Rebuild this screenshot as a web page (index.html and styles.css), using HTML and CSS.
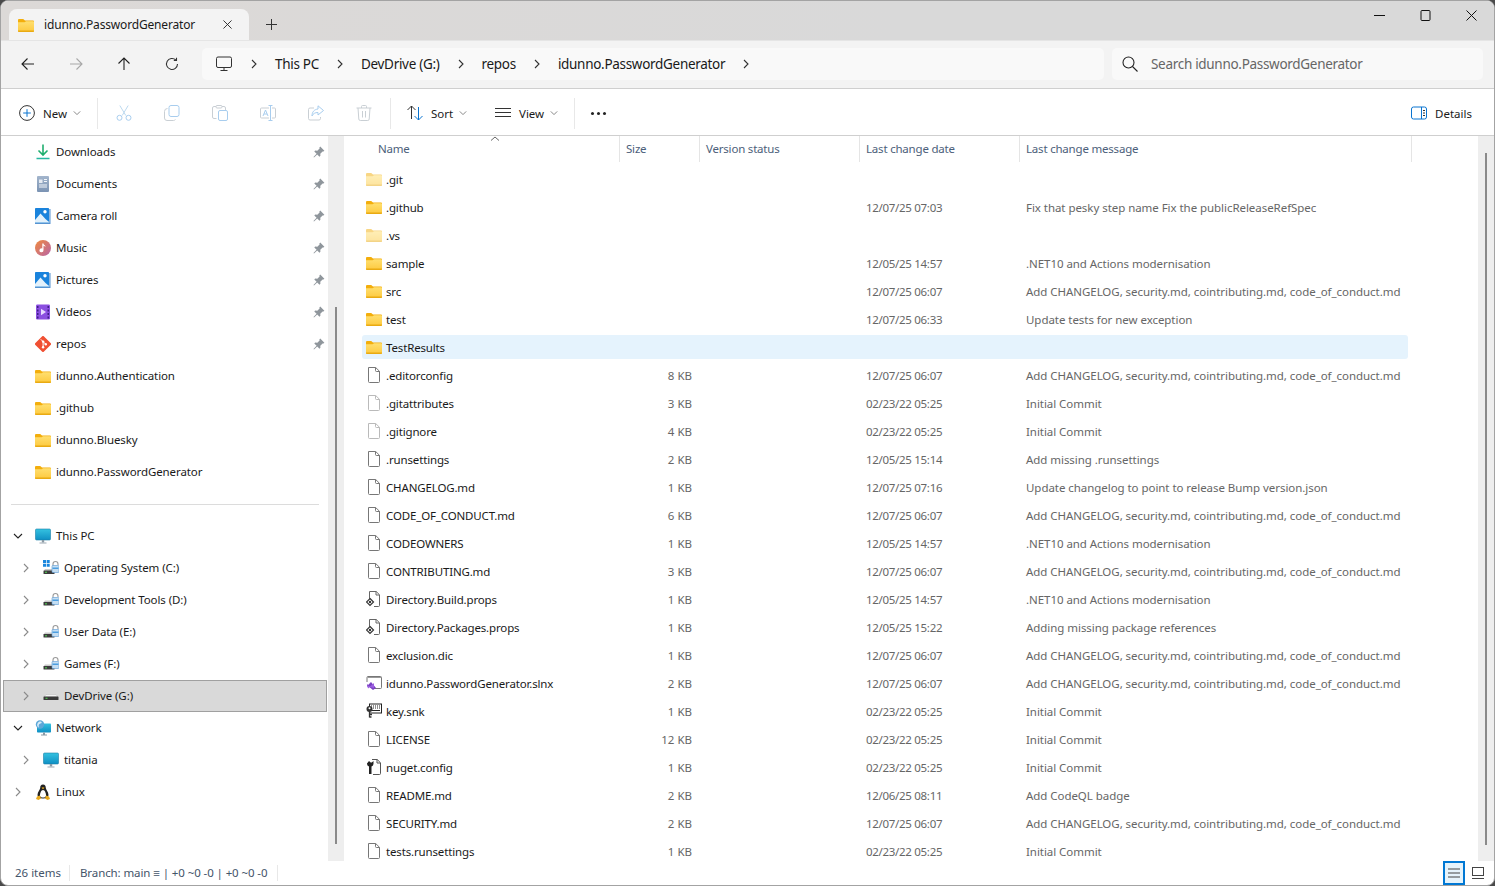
FILE: index.html
```html
<!DOCTYPE html>
<html>
<head>
  <title>idunno.PasswordGenerator - File Explorer</title>
  <link rel="stylesheet" href="styles.css">
</head>
<body>
  <svg class="icon-defs" xmlns="http://www.w3.org/2000/svg">
    <defs>
      <linearGradient id="folderFront" x1="0" y1="0" x2="0" y2="1"><stop offset="0" stop-color="#ffdf70"/><stop offset="1" stop-color="#fdc93e"/></linearGradient>
      <linearGradient id="screenBlue" x1="0" y1="0" x2="0" y2="1"><stop offset="0" stop-color="#35c2e0"/><stop offset="1" stop-color="#0f8fc4"/></linearGradient>
      <linearGradient id="musicGrad" x1="0" y1="0" x2="1" y2="1"><stop offset="0" stop-color="#f08a3c"/><stop offset="1" stop-color="#b865a8"/></linearGradient>
      <linearGradient id="docGrad" x1="0" y1="0" x2="0" y2="1"><stop offset="0" stop-color="#a3b5cc"/><stop offset="1" stop-color="#7b93b3"/></linearGradient>
      <symbol id="i-folder" viewBox="0 0 16 16"><path d="M0 3a1 1 0 0 1 1-1h4.2l1.8 1.6h8a1 1 0 0 1 1 1V7H0z" fill="#f3ae0c"/><path d="M0 5.2h6.6l1.6-1h6.8a1 1 0 0 1 1 1V14a1 1 0 0 1-1 1H1a1 1 0 0 1-1-1z" fill="url(#folderFront)"/><path d="M0 14a1 1 0 0 0 1 1h14a1 1 0 0 0 1-1v-.6H0z" fill="#e9aa12"/></symbol>
      <symbol id="i-file" viewBox="0 0 16 16"><path d="M2.5.5h7.2l3.8 3.8v10.2a1 1 0 0 1-1 1h-9a1 1 0 0 1-1-1z" fill="#fff" stroke="#777"/><path d="M9.5.5v3a1 1 0 0 0 1 1h3" fill="none" stroke="#777"/></symbol>
      <symbol id="i-props" viewBox="0 0 16 16"><path d="M3.5 8V.5h6.7l3.3 3.3v10.7a1 1 0 0 1-1 1H8" fill="#fff" stroke="#666"/><path d="M10 .5v3.500h3.500" fill="none" stroke="#666"/><path d="M4 7.500l3.500 3.500L4 14.500.5 11z" fill="#fff" stroke="#333" stroke-width="1.200"/><circle cx="4" cy="11" r="1.200" fill="#333"/></symbol>
      <symbol id="i-sln" viewBox="0 0 16 16"><path d="M1 7V2.500a1 1 0 0 1 1-1h12.500a1 1 0 0 1 1 1v10a1 1 0 0 1-1 1H8" fill="#fff" stroke="#777"/><path d="M1.500 2.500h13.500" stroke="#999"/><path d="M5 7l5 6-3 2-5-4-1 1V9l1 1 3-3z" fill="#7a3fc4"/><path d="M1 10l3 1.500L8 8v5l-4-1-2 1.500z" fill="#9b5fe0"/></symbol>
      <symbol id="i-key" viewBox="0 0 16 16"><rect x="3.500" y="1" width="12" height="9" fill="#fff" stroke="#222"/><path d="M5 3h1M7 3h1M9 3h1M11 3h1M13 3h1M5 5h1M7 5h1M9 5h1M11 5h1M13 5h1M5 7.500h9" stroke="#222" stroke-width="1.200"/><circle cx="3.500" cy="6" r="3" fill="#333"/><path d="M3.500 8v6.500M3.500 11.500h2.500M3.500 14h2" stroke="#333" stroke-width="1.300" fill="none"/><circle cx="3.500" cy="5.200" r="1" fill="#fff"/></symbol>
      <symbol id="i-nuget" viewBox="0 0 16 16"><path d="M6 .5h5.200l3.300 3.300v10.700a1 1 0 0 1-1 1H7" fill="#fff" stroke="#555"/><path d="M11 .5v3.500h3.500" fill="none" stroke="#555"/><path d="M1 4.500a3 3 0 0 0 2 3V15h2.500V7.500a3 3 0 0 0 2-3V2l-1.800 1.500h-1L3 2z" fill="#222"/></symbol>
      <symbol id="i-pc" viewBox="0 0 16 16"><rect x=".5" y="1" width="15" height="11" rx="1" fill="url(#screenBlue)" stroke="#1b7fa8" stroke-width=".6"/><path d="M6.800 12h2.400v2.500H6.800z" fill="#8a9aa5"/><path d="M4.500 14.500h7v1h-7z" fill="#9aa7b0"/></symbol>
      <symbol id="i-net" viewBox="0 0 16 16"><rect x="2" y="3.500" width="14" height="9" rx=".8" fill="url(#screenBlue)"/><path d="M8 12.500h2v2H8zM6 14.500h6v1H6z" fill="#8a9aa5"/><circle cx="5" cy="4.500" r="4.200" fill="#5da7d8"/><path d="M2.500 3.500c1-2 3-2.500 4-1.500s-1 1.500-2 2-1 2-.5 3.500C2.500 7 1.500 5.500 2.500 3.500z" fill="#d7ecf8"/></symbol>
      <symbol id="i-drive" viewBox="0 0 16 16"><path d="M2 8.500h9v2H0.500z" fill="#c9c9c9"/><rect x=".5" y="10" width="11" height="3.500" rx=".6" fill="#3c3c3c"/><rect x="2" y="11.200" width="2" height="1.200" fill="#4fc04f"/><path d="M10 6V4a2.500 2.500 0 0 1 5 0v1" fill="none" stroke="#9a9a9a" stroke-width="1.100"/><rect x="9" y="5.500" width="7" height="7" rx=".8" fill="#c5def2" stroke="#5b9bd5" stroke-width=".6"/><rect x="9.500" y="7.500" width="6" height="1.500" fill="#4d9ee0"/></symbol>
      <symbol id="i-drive-c" viewBox="0 0 16 16"><path d="M2 9h9v2H0.500z" fill="#c9c9c9"/><rect x=".5" y="10.500" width="11" height="3.500" rx=".6" fill="#3c3c3c"/><rect x="2" y="11.700" width="2" height="1.200" fill="#4fc04f"/><path d="M0 0h3v3H0zM3.700 0h3v3h-3zM0 3.700h3v3H0zM3.700 3.700h3v3h-3z" fill="#1a86dd"/><path d="M10 6V4a2.500 2.500 0 0 1 5 0v1" fill="none" stroke="#9a9a9a" stroke-width="1.100"/><rect x="9" y="5.500" width="7" height="7" rx=".8" fill="#c5def2" stroke="#5b9bd5" stroke-width=".6"/><rect x="9.500" y="7.500" width="6" height="1.500" fill="#4d9ee0"/></symbol>
      <symbol id="i-devdrive" viewBox="0 0 16 16"><path d="M3 6.500h10l2 2.500H1z" fill="#f4f4f4" stroke="#bbb" stroke-width=".5"/><rect x=".5" y="8.500" width="15" height="3.500" rx=".6" fill="#3a3a3a"/><rect x="2.500" y="9.700" width="2" height="1.200" fill="#4fc04f"/></symbol>
      <symbol id="i-linux" viewBox="0 0 16 16"><path d="M8 .5c-2 0-2.800 1.500-2.800 3.500 0 1.500-2.700 4-2.700 7 0 2 2 3.500 5.500 3.500s5.500-1.500 5.500-3.500c0-3-2.700-5.500-2.700-7C10.800 2 10 .5 8 .5z" fill="#222"/><path d="M8 6c-1.800 0-3 3-3 5.500 0 1.500 1.300 2 3 2s3-.5 3-2C11 9 9.800 6 8 6z" fill="#fff"/><path d="M6.500 3.800L8 3.200l1.500.6L8 5.200z" fill="#e8a91c"/><path d="M2 12.500l3-1 1 3-2.500 1.500L1 15zM14 12.500l-3-1-1 3 2.500 1.500 2.500-1z" fill="#e8a91c"/></symbol>
      <symbol id="i-download" viewBox="0 0 16 16"><path d="M8 .5v10M3.500 6.500L8 11l4.500-4.500" fill="none" stroke="#1fae6e" stroke-width="1.600"/><path d="M1.500 14.500h13" stroke="#27b8a0" stroke-width="1.600"/></symbol>
      <symbol id="i-docs" viewBox="0 0 16 16"><rect x="2" y="0" width="12" height="16" rx="1" fill="url(#docGrad)"/><path d="M4 3.500h3.500V7H4z" fill="#eef2f7" opacity=".9"/><path d="M9 3.500h3M9 5.500h3M4 9h8M4 11h8" stroke="#f3f6fa" stroke-width="1"/></symbol>
      <symbol id="i-pictures" viewBox="0 0 16 16"><path d="M15.500 1v15H0v-1.200h14.300V1z" fill="#1f6fc0" opacity=".75"/><rect x="0" y="0" width="14" height="14" rx=".8" fill="#1a83dc"/><circle cx="10" cy="3.800" r="1.700" fill="#fff"/><path d="M0 12l5.500-6.500L10.500 11 14 14H0z" fill="#e3f1fb"/><path d="M0 14h14v.7H0z" fill="#7bb9e8"/></symbol>
      <symbol id="i-music" viewBox="0 0 16 16"><circle cx="8" cy="8" r="8" fill="url(#musicGrad)"/><path d="M8.500 3.500v6.700a2 2 0 1 1-1.200-1.800V3.500z" fill="#fff"/><path d="M8 3.500c.6 1.500 2.500 1.500 2.500 3.500-.8-1-1.500-1.200-2.500-1.300z" fill="#fff"/></symbol>
      <symbol id="i-videos" viewBox="0 0 16 16"><rect x="1" y="0.500" width="14" height="15" rx="1.200" fill="#8b4fe0"/><path d="M2 2h1.500v2H2zM2 5.500h1.500v2H2zM2 9h1.500v2H2zM2 12.500h1.500v2H2zM12.500 2H14v2h-1.500zM12.500 5.500H14v2h-1.500zM12.500 9H14v2h-1.500zM12.500 12.500H14v2h-1.500z" fill="#3f1d86"/><path d="M6 4.800L11 8l-5 3.200z" fill="#e8dbff"/></symbol>
      <symbol id="i-git" viewBox="0 0 16 16"><path d="M7 .4a1.400 1.400 0 0 1 2 0l6.600 6.600a1.400 1.400 0 0 1 0 2L9 15.600a1.400 1.400 0 0 1-2 0L.4 9a1.400 1.400 0 0 1 0-2z" fill="#f05033"/><path d="M5.800 3.300l2.300 2.300v5.600M8.100 5.600l2.700 2.700" fill="none" stroke="#fff" stroke-width="1"/><circle cx="8.100" cy="5.600" r="1.200" fill="#fff"/><circle cx="8.100" cy="11.300" r="1.200" fill="#fff"/><circle cx="10.800" cy="8.300" r="1.200" fill="#fff"/></symbol>
      <symbol id="i-pin" viewBox="0 0 12 12"><path d="M7.200.6l4.200 4.200-1 .8-.8-.2-2.300 2.300.1 2.100-.9.900-2.300-2.300L1 11.500l-.5-.5 3.100-3.200L1.300 5.500l.9-.9 2.100.1 2.300-2.300-.2-.8z" fill="#8f969c"/></symbol>
      <symbol id="i-chev-r" viewBox="0 0 10 10"><path d="M3 1l4 4-4 4" fill="none" stroke="currentColor" stroke-width="1.100"/></symbol>
      <symbol id="i-chev-d" viewBox="0 0 10 10"><path d="M1 3l4 4 4-4" fill="none" stroke="currentColor" stroke-width="1.100"/></symbol>
    </defs>
  </svg>

  <div class="window">
    <!-- tab strip -->
    <div class="tabstrip">
      <div class="tab">
        <svg class="icon16 tab-icon"><use href="#i-folder"/></svg>
        <span class="tab-title">idunno.PasswordGenerator</span>
        <svg class="tab-close" viewBox="0 0 10 10"><path d="M.5.500l9 9M9.500.500l-9 9" stroke="#222" fill="none"/></svg>
      </div>
      <svg class="tab-add" viewBox="0 0 11 11"><path d="M5.500 0v11M0 5.500h11" stroke="#333" fill="none"/></svg>
      <div class="win-controls">
        <button class="win-btn"><svg viewBox="0 0 11 11"><path d="M0 5.500h11" stroke="#111"/></svg></button>
        <button class="win-btn"><svg viewBox="0 0 11 11"><rect x="1" y=".5" width="9" height="10" rx="1" fill="none" stroke="#111"/></svg></button>
        <button class="win-btn"><svg viewBox="0 0 11 11"><path d="M.5.500l10 10M10.500.500l-10 10" stroke="#111" fill="none"/></svg></button>
      </div>
    </div>

    <!-- back / forward / address / search -->
    <div class="navbar">
      <svg class="nav-btn" viewBox="0 0 14 14"><path d="M13 7H1M6.500 1.500L1 7l5.500 5.500" fill="none" stroke="#222" stroke-width="1.100"/></svg>
      <svg class="nav-btn" viewBox="0 0 14 14"><path d="M1 7h12M7.500 1.500L13 7l-5.500 5.500" fill="none" stroke="#a8a8a8" stroke-width="1.100"/></svg>
      <svg class="nav-btn" viewBox="0 0 14 14"><path d="M7 13V1M1.500 6.500L7 1l5.500 5.500" fill="none" stroke="#222" stroke-width="1.100"/></svg>
      <svg class="nav-btn" viewBox="0 0 14 14"><path d="M12.500 7a5.500 5.500 0 1 1-1.700-4M11.500 .8v2.700H8.800" fill="none" stroke="#333" stroke-width="1.100"/></svg>
      <div class="address">
        <svg class="address-pc" viewBox="0 0 16 16"><rect x=".5" y="1" width="15" height="10.500" rx="1.500" fill="none" stroke="#333"/><path d="M8 11.500v3M4.500 14.500h7" stroke="#333" fill="none"/></svg>
        <svg class="crumb-chev"><use href="#i-chev-r"/></svg>
        <span class="crumb">This PC</span>
        <svg class="crumb-chev"><use href="#i-chev-r"/></svg>
        <span class="crumb">DevDrive (G:)</span>
        <svg class="crumb-chev"><use href="#i-chev-r"/></svg>
        <span class="crumb">repos</span>
        <svg class="crumb-chev"><use href="#i-chev-r"/></svg>
        <span class="crumb">idunno.PasswordGenerator</span>
        <svg class="crumb-chev"><use href="#i-chev-r"/></svg>
      </div>
      <div class="search">
        <svg class="search-icon" viewBox="0 0 16 16"><circle cx="6.500" cy="6.500" r="5.500" fill="none" stroke="#222" stroke-width="1.100"/><path d="M10.500 10.500l5 5" stroke="#222" stroke-width="1.100"/></svg>
        <span class="search-text">Search idunno.PasswordGenerator</span>
      </div>
    </div>

    <!-- command bar -->
    <div class="toolbar">
      <div class="tool-new">
        <svg class="icon16" viewBox="0 0 16 16"><circle cx="8" cy="8" r="7.400" fill="none" stroke="#333"/><path d="M8 4.200v7.600M4.200 8h7.600" stroke="#0a74d0" fill="none"/></svg>
        <span class="tool-label">New</span>
        <svg class="tool-chev"><use href="#i-chev-d"/></svg>
      </div>
      <div class="tool-sep"></div>
      <div class="tool-icon"><svg class="icon16" viewBox="0 0 16 16"><path d="M3.800 .5l6 10M12.200 .5l-6 10" stroke="#bcd9ef" fill="none"/><circle cx="3.500" cy="12.800" r="2.500" fill="none" stroke="#a8cdee"/><circle cx="12.500" cy="12.800" r="2.500" fill="none" stroke="#a8cdee"/></svg></div>
      <div class="tool-icon"><svg class="icon16" viewBox="0 0 16 16"><rect x="5" y=".5" width="10" height="11" rx="2" fill="none" stroke="#a8cdee"/><path d="M3.500 3.500a3 3 0 0 0-3 3V13a2.500 2.500 0 0 0 2.500 2.500h6.500a3 3 0 0 0 2-1" fill="none" stroke="#c9cfd4"/></svg></div>
      <div class="tool-icon"><svg class="icon16" viewBox="0 0 16 16"><path d="M4.500 13.500H2a1.500 1.500 0 0 1-1.500-1.500V3A1.500 1.500 0 0 1 2 1.500h10A1.500 1.500 0 0 1 13.500 3v2" fill="none" stroke="#c9cfd4"/><rect x="4" y=".5" width="6" height="2.500" rx="1" fill="#fff" stroke="#c9cfd4"/><rect x="6.500" y="5.500" width="9" height="10" rx="1.500" fill="#fff" stroke="#a8cdee"/></svg></div>
      <div class="tool-icon"><svg class="icon16" viewBox="0 0 16 16"><path d="M9 3H1.500a1 1 0 0 0-1 1v8a1 1 0 0 0 1 1H9M12 3h2.500a1 1 0 0 1 1 1v8a1 1 0 0 1-1 1H12" fill="none" stroke="#c9cfd4"/><path d="M10.500 .5v15M8.500 .5h4M8.500 15.500h4" stroke="#a8cdee" fill="none"/><path d="M3 11l2.500-6L8 11M4 9h3" stroke="#a8cdee" fill="none"/></svg></div>
      <div class="tool-icon"><svg class="icon16" viewBox="0 0 16 16"><path d="M6 3H2a1.500 1.500 0 0 0-1.500 1.500v9A1.500 1.500 0 0 0 2 15h9a1.500 1.500 0 0 0 1.500-1.500V12" fill="none" stroke="#c9cfd4"/><path d="M10 .8L15.500 5.500 10 10V7.500C7 7.500 5.200 8.500 4 11c0-4 2-6.500 6-7z" fill="none" stroke="#a8cdee"/></svg></div>
      <div class="tool-icon"><svg class="icon16" viewBox="0 0 16 16"><path d="M.5 3h15M5.500 3V1.500a1 1 0 0 1 1-1h3a1 1 0 0 1 1 1V3M2 3l.8 11a1.500 1.500 0 0 0 1.500 1.500h7.400a1.500 1.500 0 0 0 1.500-1.500L14 3M6.500 6v6.500M9.500 6v6.500" fill="none" stroke="#c9cfd4"/></svg></div>
      <div class="tool-sep sep-gap"></div>
      <div class="tool-sort">
        <svg class="icon16" viewBox="0 0 16 16"><path d="M4.500 14V1M.5 5l4-4 4 4" fill="none" stroke="#333"/><path d="M11.500 2v13M7.500 11l4 4 4-4" fill="none" stroke="#0a74d0"/></svg>
        <span class="tool-label">Sort</span>
        <svg class="tool-chev"><use href="#i-chev-d"/></svg>
      </div>
      <div class="tool-view">
        <svg class="icon16" viewBox="0 0 16 16"><path d="M0 3.500h16M0 7.500h16M0 11.500h16" stroke="#333" fill="none"/></svg>
        <span class="tool-label">View</span>
        <svg class="tool-chev"><use href="#i-chev-d"/></svg>
      </div>
      <div class="tool-sep"></div>
      <div class="tool-more"><span></span><span></span><span></span></div>
      <div class="tool-details">
        <svg class="icon16" viewBox="0 0 16 16"><rect x=".5" y="2" width="15" height="12" rx="2" fill="none" stroke="#0a74d0"/><path d="M10.500 2v12" stroke="#0a74d0"/><path d="M12 5.500h2M12 8h2M12 10.500h2" stroke="#333"/></svg>
        <span class="tool-label">Details</span>
      </div>
    </div>

    <div class="content">
      <!-- left navigation pane -->
      <div class="sidebar">
        <div class="nav-row"><span class="nav-chev"></span><svg class="icon16"><use href="#i-download"/></svg><span class="nav-text">Downloads</span><svg class="pin"><use href="#i-pin"/></svg></div>
        <div class="nav-row"><span class="nav-chev"></span><svg class="icon16"><use href="#i-docs"/></svg><span class="nav-text">Documents</span><svg class="pin"><use href="#i-pin"/></svg></div>
        <div class="nav-row"><span class="nav-chev"></span><svg class="icon16"><use href="#i-pictures"/></svg><span class="nav-text">Camera roll</span><svg class="pin"><use href="#i-pin"/></svg></div>
        <div class="nav-row"><span class="nav-chev"></span><svg class="icon16"><use href="#i-music"/></svg><span class="nav-text">Music</span><svg class="pin"><use href="#i-pin"/></svg></div>
        <div class="nav-row"><span class="nav-chev"></span><svg class="icon16"><use href="#i-pictures"/></svg><span class="nav-text">Pictures</span><svg class="pin"><use href="#i-pin"/></svg></div>
        <div class="nav-row"><span class="nav-chev"></span><svg class="icon16"><use href="#i-videos"/></svg><span class="nav-text">Videos</span><svg class="pin"><use href="#i-pin"/></svg></div>
        <div class="nav-row"><span class="nav-chev"></span><svg class="icon16"><use href="#i-git"/></svg><span class="nav-text">repos</span><svg class="pin"><use href="#i-pin"/></svg></div>
        <div class="nav-row"><span class="nav-chev"></span><svg class="icon16"><use href="#i-folder"/></svg><span class="nav-text">idunno.Authentication</span></div>
        <div class="nav-row"><span class="nav-chev"></span><svg class="icon16"><use href="#i-folder"/></svg><span class="nav-text">.github</span></div>
        <div class="nav-row"><span class="nav-chev"></span><svg class="icon16"><use href="#i-folder"/></svg><span class="nav-text">idunno.Bluesky</span></div>
        <div class="nav-row"><span class="nav-chev"></span><svg class="icon16"><use href="#i-folder"/></svg><span class="nav-text">idunno.PasswordGenerator</span></div>
        <div class="nav-sep"></div>
        <div class="nav-row"><svg class="nav-chev dark"><use href="#i-chev-d"/></svg><svg class="icon16"><use href="#i-pc"/></svg><span class="nav-text">This PC</span></div>
        <div class="nav-row sub"><svg class="nav-chev"><use href="#i-chev-r"/></svg><svg class="icon16"><use href="#i-drive-c"/></svg><span class="nav-text">Operating System (C:)</span></div>
        <div class="nav-row sub"><svg class="nav-chev"><use href="#i-chev-r"/></svg><svg class="icon16"><use href="#i-drive"/></svg><span class="nav-text">Development Tools (D:)</span></div>
        <div class="nav-row sub"><svg class="nav-chev"><use href="#i-chev-r"/></svg><svg class="icon16"><use href="#i-drive"/></svg><span class="nav-text">User Data (E:)</span></div>
        <div class="nav-row sub"><svg class="nav-chev"><use href="#i-chev-r"/></svg><svg class="icon16"><use href="#i-drive"/></svg><span class="nav-text">Games (F:)</span></div>
        <div class="nav-row sub selected"><svg class="nav-chev"><use href="#i-chev-r"/></svg><svg class="icon16"><use href="#i-devdrive"/></svg><span class="nav-text">DevDrive (G:)</span></div>
        <div class="nav-row"><svg class="nav-chev dark"><use href="#i-chev-d"/></svg><svg class="icon16"><use href="#i-net"/></svg><span class="nav-text">Network</span></div>
        <div class="nav-row sub"><svg class="nav-chev"><use href="#i-chev-r"/></svg><svg class="icon16"><use href="#i-pc"/></svg><span class="nav-text">titania</span></div>
        <div class="nav-row"><svg class="nav-chev"><use href="#i-chev-r"/></svg><svg class="icon16"><use href="#i-linux"/></svg><span class="nav-text">Linux</span></div>
      </div>
      <div class="scrolltrack side-track"><div class="thumb side-thumb"></div></div>

      <!-- file list -->
      <div class="files">
        <svg class="sort-caret" viewBox="0 0 10 5"><path d="M1 4.500L5 1l4 3.500" fill="none" stroke="#666"/></svg>
        <div class="col-head">
          <div class="head-cell head-name">Name</div>
          <div class="head-cell">Size</div>
          <div class="head-cell">Version status</div>
          <div class="head-cell">Last change date</div>
          <div class="head-cell head-last">Last change message</div>
        </div>
        <div class="file-list">
          <div class="file-row"><span class="name hidden-item"><svg class="icon16"><use href="#i-folder"/></svg><span>.git</span></span></div>
          <div class="file-row"><span class="name"><svg class="icon16"><use href="#i-folder"/></svg><span>.github</span></span><span class="size"></span><span></span><span class="date">12/07/25 07:03</span><span class="cell">Fix that pesky step name Fix the publicReleaseRefSpec</span></div>
          <div class="file-row"><span class="name hidden-item"><svg class="icon16"><use href="#i-folder"/></svg><span>.vs</span></span></div>
          <div class="file-row"><span class="name"><svg class="icon16"><use href="#i-folder"/></svg><span>sample</span></span><span class="size"></span><span></span><span class="date">12/05/25 14:57</span><span class="cell">.NET10 and Actions modernisation</span></div>
          <div class="file-row"><span class="name"><svg class="icon16"><use href="#i-folder"/></svg><span>src</span></span><span class="size"></span><span></span><span class="date">12/07/25 06:07</span><span class="cell">Add CHANGELOG, security.md, cointributing.md, code_of_conduct.md</span></div>
          <div class="file-row"><span class="name"><svg class="icon16"><use href="#i-folder"/></svg><span>test</span></span><span class="size"></span><span></span><span class="date">12/07/25 06:33</span><span class="cell">Update tests for new exception</span></div>
          <div class="file-row hover"><span class="name"><svg class="icon16"><use href="#i-folder"/></svg><span>TestResults</span></span></div>
          <div class="file-row"><span class="name"><svg class="icon16"><use href="#i-file"/></svg><span>.editorconfig</span></span><span class="size">8 KB</span><span></span><span class="date">12/07/25 06:07</span><span class="cell">Add CHANGELOG, security.md, cointributing.md, code_of_conduct.md</span></div>
          <div class="file-row"><span class="name hidden-file"><svg class="icon16"><use href="#i-file"/></svg><span>.gitattributes</span></span><span class="size">3 KB</span><span></span><span class="date">02/23/22 05:25</span><span class="cell">Initial Commit</span></div>
          <div class="file-row"><span class="name hidden-file"><svg class="icon16"><use href="#i-file"/></svg><span>.gitignore</span></span><span class="size">4 KB</span><span></span><span class="date">02/23/22 05:25</span><span class="cell">Initial Commit</span></div>
          <div class="file-row"><span class="name"><svg class="icon16"><use href="#i-file"/></svg><span>.runsettings</span></span><span class="size">2 KB</span><span></span><span class="date">12/05/25 15:14</span><span class="cell">Add missing .runsettings</span></div>
          <div class="file-row"><span class="name"><svg class="icon16"><use href="#i-file"/></svg><span>CHANGELOG.md</span></span><span class="size">1 KB</span><span></span><span class="date">12/07/25 07:16</span><span class="cell">Update changelog to point to release Bump version.json</span></div>
          <div class="file-row"><span class="name"><svg class="icon16"><use href="#i-file"/></svg><span>CODE_OF_CONDUCT.md</span></span><span class="size">6 KB</span><span></span><span class="date">12/07/25 06:07</span><span class="cell">Add CHANGELOG, security.md, cointributing.md, code_of_conduct.md</span></div>
          <div class="file-row"><span class="name"><svg class="icon16"><use href="#i-file"/></svg><span>CODEOWNERS</span></span><span class="size">1 KB</span><span></span><span class="date">12/05/25 14:57</span><span class="cell">.NET10 and Actions modernisation</span></div>
          <div class="file-row"><span class="name"><svg class="icon16"><use href="#i-file"/></svg><span>CONTRIBUTING.md</span></span><span class="size">3 KB</span><span></span><span class="date">12/07/25 06:07</span><span class="cell">Add CHANGELOG, security.md, cointributing.md, code_of_conduct.md</span></div>
          <div class="file-row"><span class="name"><svg class="icon16"><use href="#i-props"/></svg><span>Directory.Build.props</span></span><span class="size">1 KB</span><span></span><span class="date">12/05/25 14:57</span><span class="cell">.NET10 and Actions modernisation</span></div>
          <div class="file-row"><span class="name"><svg class="icon16"><use href="#i-props"/></svg><span>Directory.Packages.props</span></span><span class="size">1 KB</span><span></span><span class="date">12/05/25 15:22</span><span class="cell">Adding missing package references</span></div>
          <div class="file-row"><span class="name"><svg class="icon16"><use href="#i-file"/></svg><span>exclusion.dic</span></span><span class="size">1 KB</span><span></span><span class="date">12/07/25 06:07</span><span class="cell">Add CHANGELOG, security.md, cointributing.md, code_of_conduct.md</span></div>
          <div class="file-row"><span class="name"><svg class="icon16"><use href="#i-sln"/></svg><span>idunno.PasswordGenerator.slnx</span></span><span class="size">2 KB</span><span></span><span class="date">12/07/25 06:07</span><span class="cell">Add CHANGELOG, security.md, cointributing.md, code_of_conduct.md</span></div>
          <div class="file-row"><span class="name"><svg class="icon16"><use href="#i-key"/></svg><span>key.snk</span></span><span class="size">1 KB</span><span></span><span class="date">02/23/22 05:25</span><span class="cell">Initial Commit</span></div>
          <div class="file-row"><span class="name"><svg class="icon16"><use href="#i-file"/></svg><span>LICENSE</span></span><span class="size">12 KB</span><span></span><span class="date">02/23/22 05:25</span><span class="cell">Initial Commit</span></div>
          <div class="file-row"><span class="name"><svg class="icon16"><use href="#i-nuget"/></svg><span>nuget.config</span></span><span class="size">1 KB</span><span></span><span class="date">02/23/22 05:25</span><span class="cell">Initial Commit</span></div>
          <div class="file-row"><span class="name"><svg class="icon16"><use href="#i-file"/></svg><span>README.md</span></span><span class="size">2 KB</span><span></span><span class="date">12/06/25 08:11</span><span class="cell">Add CodeQL badge</span></div>
          <div class="file-row"><span class="name"><svg class="icon16"><use href="#i-file"/></svg><span>SECURITY.md</span></span><span class="size">2 KB</span><span></span><span class="date">12/07/25 06:07</span><span class="cell">Add CHANGELOG, security.md, cointributing.md, code_of_conduct.md</span></div>
          <div class="file-row"><span class="name"><svg class="icon16"><use href="#i-file"/></svg><span>tests.runsettings</span></span><span class="size">1 KB</span><span></span><span class="date">02/23/22 05:25</span><span class="cell">Initial Commit</span></div>
        </div>
      </div>
      <div class="scrolltrack main-track"><div class="thumb main-thumb"></div></div>
    </div>

    <!-- status bar -->
    <div class="statusbar">
      <span class="status-count">26 items</span>
      <span class="status-branch">Branch: main ≡ | +0 ~0 -0 | +0 ~0 -0</span>
      <div class="view-toggle">
        <div class="view-btn active"><svg viewBox="0 0 12 10"><path d="M0 1h12M0 5h12M0 9h12" stroke="#444" stroke-width="1.200" fill="none"/></svg></div>
        <div class="view-btn"><svg viewBox="0 0 12 12"><rect x=".5" y=".5" width="11" height="8" fill="none" stroke="#444"/><path d="M0 11.500h12" stroke="#444"/></svg></div>
      </div>
    </div>
  </div>
</body>
</html>
```

FILE: styles.css
```css
* {
  box-sizing: border-box;
}

html,
body {
  margin: 0;
  height: 100%;
  overflow: hidden;
}

body {
  background-color: #4a4a4a;
  font-family: "Noto Sans", "Open Sans", sans-serif;
  font-size: 11.5px;
  color: #1a1a1a;
}

.icon-defs {
  display: block;
  width: 0;
  height: 0;
}

.icon16 {
  display: block;
  width: 16px;
  height: 16px;
  flex: none;
}

.window {
  height: 886px;
  display: flex;
  flex-direction: column;
  background-color: #fff;
  border: 1px solid #a3a3a3;
  border-radius: 8px;
  overflow: hidden;
}

/* tab strip */
.tabstrip {
  height: 39px;
  flex: none;
  display: flex;
  align-items: flex-end;
  padding-left: 8px;
  background: linear-gradient(90deg, #dcd9d7, #d9d9d9 60%);
}

.tab {
  width: 240px;
  height: 31px;
  display: flex;
  align-items: center;
  padding: 0 17px 0 9px;
  background-color: #f3f3f3;
  border-radius: 8px 8px 0 0;
}

.tab-title {
  margin-left: 10px;
  font-size: 12px;
  letter-spacing: -0.17px;
}

.tab-close {
  width: 9px;
  height: 9px;
  margin-left: auto;
}

.tab-add {
  width: 11px;
  height: 11px;
  margin: 0 0 10px 17px;
}

.win-controls {
  display: flex;
  align-self: stretch;
  margin-left: auto;
}

.win-btn {
  width: 46px;
  height: 28px;
  display: flex;
  align-items: center;
  justify-content: center;
  padding: 0;
  background: none;
  border: none;
}

.win-btn svg {
  width: 11px;
  height: 11px;
}

/* nav bar */
.navbar {
  height: 49px;
  flex: none;
  display: flex;
  align-items: center;
  padding: 0 11px 1px 20px;
  background-color: #f3f3f3;
  border-bottom: 1px solid #cfcfcf;
  border-top: 1px solid #e5e5e5;
}

.nav-btn {
  width: 14px;
  height: 14px;
  margin-right: 34px;
  flex: none;
}

.address {
  width: 902px;
  height: 32px;
  margin-left: -11px;
  display: flex;
  align-items: center;
  gap: 18px;
  padding-left: 14px;
  background-color: #f9f9f9;
  border-radius: 5px;
  font-size: 13.5px;
  letter-spacing: -0.3px;
}

.address-pc {
  width: 16px;
  height: 16px;
  margin-right: 1px;
}

.crumb-chev {
  width: 10px;
  height: 10px;
  margin: 0 -2px;
  color: #333;
  flex: none;
}

.crumb {
  white-space: nowrap;
}

.search {
  width: 371px;
  height: 32px;
  margin-left: 8px;
  display: flex;
  align-items: center;
  padding-left: 10px;
  background-color: #f9f9f9;
  border-radius: 5px;
  font-size: 13.5px;
  letter-spacing: -0.3px;
}

.search-icon {
  width: 16px;
  height: 16px;
}

.search-text {
  margin-left: 13px;
  color: #666;
}

/* command bar */
.toolbar {
  height: 47px;
  flex: none;
  display: flex;
  align-items: center;
  padding: 2px 0 0 18px;
  background-color: #fff;
  border-bottom: 1px solid #cfcfcf;
}

.tool-new {
  width: 78px;
  display: flex;
  align-items: center;
}

.tool-label {
  margin-left: 8px;
}

.tool-chev {
  width: 8px;
  height: 8px;
  margin-left: 6px;
  color: #777;
}

.tool-sep {
  width: 1px;
  height: 31px;
  flex: none;
  background-color: #e8e8e8;
}

.sep-gap {
  margin-left: 2px;
  margin-right: 16px;
}

.tool-icon {
  width: 48px;
  display: flex;
  justify-content: center;
}

.tool-new + .tool-sep {
  margin-right: 2px;
}

.tool-sort {
  width: 88px;
  display: flex;
  align-items: center;
}

.tool-view {
  width: 79px;
  display: flex;
  align-items: center;
}

.tool-more {
  display: flex;
  gap: 3px;
  margin-left: 16px;
}

.tool-more span {
  width: 3px;
  height: 3px;
  border-radius: 50%;
  background-color: #222;
}

.tool-details {
  display: flex;
  align-items: center;
  margin-left: auto;
  padding-right: 22px;
}

/* main area */
.content {
  flex: 1;
  min-height: 0;
  display: flex;
}

.sidebar {
  width: 327px;
  flex: none;
  overflow: hidden;
}

.nav-row {
  height: 32px;
  display: flex;
  align-items: center;
  padding-left: 9px;
}

.nav-row.sub {
  padding-left: 17px;
}

.nav-row.selected {
  margin: 0 1px 0 2px;
  padding-left: 15px;
  background-color: #d9d9d9;
  box-shadow: inset 0 0 0 1px #a0a0a0;
}

.nav-chev {
  width: 16px;
  height: 10px;
  flex: none;
  margin-right: 9px;
  color: #8a8a8a;
}

.nav-chev.dark {
  color: #222;
}

.nav-text {
  margin-left: 5px;
  padding-bottom: 2px;
  white-space: nowrap;
  letter-spacing: -0.1px;
}

.pin {
  width: 12px;
  height: 12px;
  margin-left: auto;
  margin-right: 3px;
}

.nav-sep {
  height: 1px;
  margin: 16px 9px 15px 10px;
  background-color: #dcdcdc;
}

.scrolltrack {
  width: 16px;
  flex: none;
  background-color: #eeeeee;
}

.thumb {
  width: 2px;
  margin-left: 7px;
  background-color: #8a8a8a;
}

.side-thumb {
  height: 537px;
  margin-top: 171px;
}

.main-thumb {
  height: 692px;
  margin-top: 17px;
}

.files {
  position: relative;
  flex: 1;
  min-width: 0;
  overflow: hidden;
}

.sort-caret {
  position: absolute;
  left: 146px;
  top: 0;
  width: 10px;
  height: 5px;
}

.col-head {
  height: 26px;
  margin-left: 18px;
  display: grid;
  grid-template-columns: 257px 80px 160px 160px 393px;
}

.head-cell {
  padding-left: 6px;
  line-height: 26px;
  color: #4c607a;
  letter-spacing: -0.2px;
  border-left: 1px solid #e5e5e5;
}

.head-name {
  padding-left: 16px;
  border-left: none;
}

.head-last {
  border-right: 1px solid #e5e5e5;
}

.file-list {
  margin: 5px 0 0 18px;
  width: 1046px;
  display: flex;
  flex-direction: column;
  gap: 4px;
}

.file-row {
  height: 24px;
  flex: none;
  display: grid;
  grid-template-columns: 257px 80px 160px 160px 389px;
  align-items: center;
  white-space: nowrap;
  border-radius: 3px;
}

.file-row.hover {
  background-color: #e5f3fd;
}

.name {
  display: flex;
  align-items: center;
  padding-left: 4px;
}

.name span {
  margin-left: 4px;
  letter-spacing: -0.15px;
}

.hidden-item .icon16,
.hidden-file .icon16 {
  opacity: 0.5;
}

.size {
  padding-right: 7px;
  text-align: right;
  color: #666;
}

.date {
  padding-left: 7px;
  color: #666;
  letter-spacing: -0.3px;
}

.cell {
  padding-left: 7px;
  color: #666;
  letter-spacing: -0.05px;
}

/* status bar */
.statusbar {
  height: 24px;
  flex: none;
  display: flex;
  align-items: center;
  padding-left: 14px;
  color: #44546a;
}

.status-count {
  width: 55px;
  height: 16px;
  line-height: 16px;
  border-right: 1px solid #e8e8e8;
}

.status-branch {
  margin-left: 10px;
  padding-right: 10px;
  line-height: 16px;
  letter-spacing: -0.1px;
  border-right: 1px solid #e8e8e8;
}

.view-toggle {
  display: flex;
  align-items: center;
  margin-left: auto;
  padding-right: 5px;
}

.view-btn {
  width: 22px;
  height: 24px;
  display: flex;
  align-items: center;
  justify-content: center;
  margin-left: 2px;
}

.view-btn.active {
  background-color: #e5f3fb;
  border: 2px solid #0078d4;
}

.view-btn svg {
  width: 12px;
  height: 12px;
}
```
